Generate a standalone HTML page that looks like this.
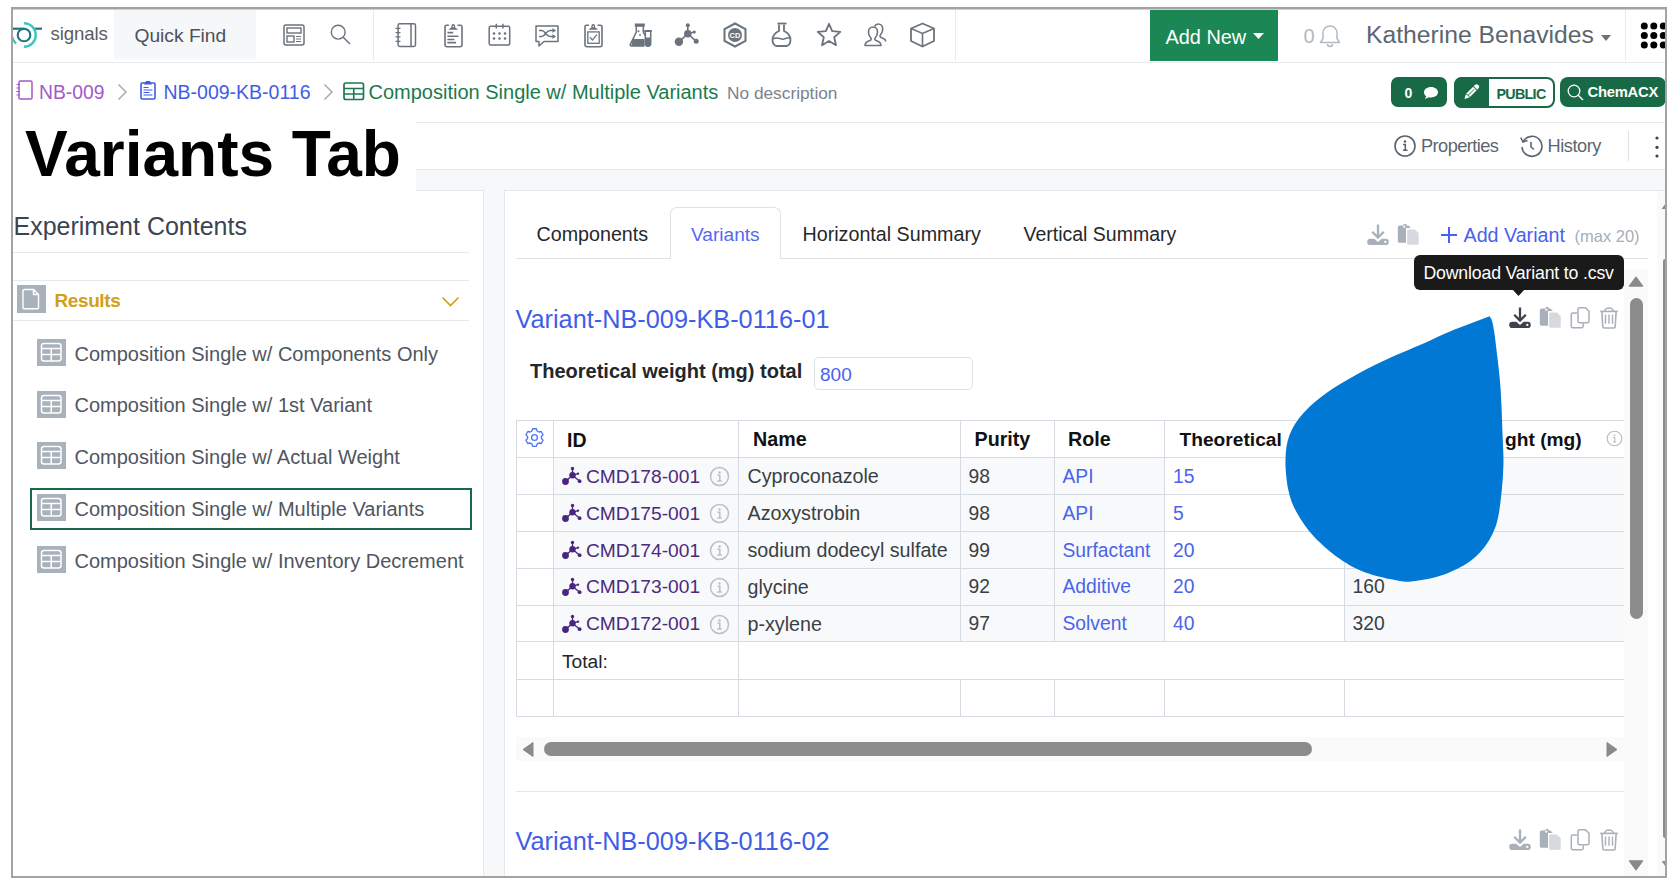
<!DOCTYPE html>
<html><head><meta charset="utf-8"><style>
html,body{margin:0;padding:0;background:#fff;width:1672px;height:885px;overflow:hidden;position:relative}
.t{position:absolute;white-space:nowrap;font-family:"Liberation Sans",sans-serif;line-height:normal}
svg{display:block}
</style></head><body>
<div style="position:absolute;left:13px;top:9px;width:1652px;height:1px;background:#b9dcc3"></div>
<div style="position:absolute;left:13px;top:62px;width:1652px;height:1px;background:#e8eaee"></div>
<div style="position:absolute;left:114px;top:10px;width:142px;height:49px;background:#f6f7f9"></div>
<div style="position:absolute;left:373px;top:10px;width:1px;height:51px;background:#e9ebee"></div>
<div style="position:absolute;left:955px;top:10px;width:1px;height:51px;background:#e9ebee"></div>
<div style="position:absolute;left:1625px;top:10px;width:1px;height:51px;background:#e9ebee"></div>
<div style="position:absolute;left:13px;top:122px;width:1652px;height:1px;background:#e6e9ed"></div>
<div style="position:absolute;left:13px;top:169px;width:1652px;height:1px;background:#e6e9ed"></div>
<div style="position:absolute;left:13px;top:170px;width:1652px;height:20px;background:#f7f8fa"></div>
<div style="position:absolute;left:13px;top:190px;width:470px;height:687px;background:#fff;border-top:1px solid #e4e8ec;border-right:1px solid #e4e8ec;box-sizing:border-box;width:471px"></div>
<div style="position:absolute;left:484px;top:190px;width:20px;height:687px;background:#f7f8fa"></div>
<div style="position:absolute;left:504px;top:190px;width:1153px;height:687px;background:#fff;border-top:1px solid #e4e8ec;border-left:1px solid #e4e8ec;box-sizing:border-box"></div>
<div style="position:absolute;left:1657px;top:190px;width:8px;height:687px;background:#fafafa"></div>
<div style="position:absolute;left:1657px;top:190px;width:8px;height:1px;background:#e4e8ec"></div>
<div style="position:absolute;left:13px;top:122px;width:403px;height:69px;background:#fff"></div>
<svg style="position:absolute;left:13px;top:20px;overflow:visible;" width="32" height="30" viewBox="0 0 32 30">
<circle cx="11" cy="15" r="6.3" fill="none" stroke="#1f7680" stroke-width="2.1"/>
<path d="M0 8.7 H11.5" stroke="#1f7680" stroke-width="2.2"/>
<path d="M22 8.7 H29" stroke="#1f7680" stroke-width="2.2"/>
<path d="M11 3.2 A11.8 11.8 0 0 1 11 26.8" fill="none" stroke="#3ac6bf" stroke-width="2.4"/>
<path d="M-0.8 16.9 A11.8 11.8 0 0 0 3.1 23.7" fill="none" stroke="#3ac6bf" stroke-width="2.4"/>
</svg>
<div class="t" style="left:50.5px;top:23.47px;font-size:18.6px;color:#585d62;font-weight:400;letter-spacing:-0.1px">signals</div>
<div class="t" style="left:134.5px;top:25.37px;font-size:19.2px;color:#4b525a;font-weight:400;">Quick Find</div>
<svg style="position:absolute;left:283px;top:24px;overflow:visible;" width="22" height="22" viewBox="0 0 22 22"><rect x="1" y="1" width="20" height="20" rx="2" fill="none" stroke="#6b737c" stroke-width="1.5"/>
<rect x="4" y="4" width="14" height="5" fill="none" stroke="#6b737c" stroke-width="1.4"/>
<rect x="4" y="12" width="7" height="6" fill="none" stroke="#6b737c" stroke-width="1.4"/>
<path d="M13 12.5h5M13 15h5M13 17.5h5" stroke="#6b737c" stroke-width="1.2"/></svg>
<svg style="position:absolute;left:330px;top:24px;overflow:visible;" width="21" height="21" viewBox="0 0 21 21"><circle cx="8.2" cy="8.2" r="6.9" fill="none" stroke="#6b737c" stroke-width="1.4"/><path d="M13.2 13.2 L20 20" stroke="#6b737c" stroke-width="1.5"/></svg>
<svg style="position:absolute;left:394px;top:23px;overflow:visible;" width="23" height="24" viewBox="0 0 23 24"><rect x="4.1" y="0.8" width="17.4" height="22.6" rx="1.6" fill="none" stroke="#6b737c" stroke-width="1.5"/>
<path d="M17 0.8v22.6" stroke="#6b737c" stroke-width="1.5"/>
<path d="M1.5 5.3h5M1.5 9.6h5M1.5 13.9h5M1.5 18.4h5" stroke="#6b737c" stroke-width="1.3"/></svg>
<svg style="position:absolute;left:444px;top:23px;overflow:visible;" width="19" height="25" viewBox="0 0 19 25"><path d="M4.9 2.2H2.6A1.6 1.6 0 0 0 1 3.8V22.1A1.6 1.6 0 0 0 2.6 23.7H16.4A1.6 1.6 0 0 0 18 22.1V3.8A1.6 1.6 0 0 0 16.4 2.2H13.5" fill="none" stroke="#6b737c" stroke-width="1.6"/><path d="M4.4 6.8L7.4 4.3V2.9A1.85 1.85 0 0 1 11.1 2.9V4.3L14.1 6.8z" fill="#6b737c"/><circle cx="9.25" cy="3.4" r="0.75" fill="#fff"/><path d="M3.4 9.6H9.2M3.4 13.2H14.4M3.4 16.5H10.4M3.4 19.6H12" stroke="#6b737c" stroke-width="1.6"/></svg>
<svg style="position:absolute;left:488px;top:23px;overflow:visible;" width="23" height="23" viewBox="0 0 23 23"><rect x="1.2" y="3.2" width="20.5" height="18.8" rx="1.5" fill="none" stroke="#6b737c" stroke-width="1.5"/>
<path d="M8.3 0.8v4.8M14.9 0.8v4.8" stroke="#6b737c" stroke-width="1.5"/>
<circle cx="6" cy="10.5" r="1.3" fill="#6b737c"/><circle cx="11.5" cy="10.5" r="1.3" fill="#6b737c"/><circle cx="17" cy="10.5" r="1.3" fill="#6b737c"/>
<circle cx="6" cy="15.5" r="1.3" fill="#6b737c"/><circle cx="11.5" cy="15.5" r="1.3" fill="#6b737c"/><circle cx="17" cy="15.5" r="1.3" fill="#6b737c"/></svg>
<svg style="position:absolute;left:534px;top:24px;overflow:visible;" width="26" height="23" viewBox="0 0 26 23"><path d="M2 2h22v15.5H10l-5 4.5v-4.5H2z" fill="none" stroke="#6b737c" stroke-width="1.5" stroke-linejoin="round"/>
<path d="M5 6.5h3c3 0 4 6 8 6h4M5 12.5h3c3 0 4-6 8-6h4" fill="none" stroke="#6b737c" stroke-width="1.5"/>
<path d="M18.5 4 l3.5 2.5 -3.5 2.5z M18.5 10 l3.5 2.5 -3.5 2.5z" fill="#6b737c"/></svg>
<svg style="position:absolute;left:584px;top:23px;overflow:visible;" width="19" height="25" viewBox="0 0 19 25"><path d="M4.9 2.2H2.6A1.6 1.6 0 0 0 1 3.8V22.1A1.6 1.6 0 0 0 2.6 23.7H16.4A1.6 1.6 0 0 0 18 22.1V3.8A1.6 1.6 0 0 0 16.4 2.2H13.5" fill="none" stroke="#6b737c" stroke-width="1.6"/><path d="M4.4 6.8L7.4 4.3V2.9A1.85 1.85 0 0 1 11.1 2.9V4.3L14.1 6.8z" fill="#6b737c"/><circle cx="9.25" cy="3.4" r="0.75" fill="#fff"/><rect x="3.8" y="8.9" width="11.4" height="11.4" fill="none" stroke="#6b737c" stroke-width="1.3"/><path d="M5.8 14.2l2.6 2.8 4.6-5.3" fill="none" stroke="#6b737c" stroke-width="1.2"/></svg>
<svg style="position:absolute;left:629px;top:22px;overflow:visible;" width="24" height="26" viewBox="0 0 24 26"><rect x="5.8" y="1.5" width="10" height="3.3" fill="#6b737c"/>
<path d="M7.3 4.5V10L1.3 22.3C.9 23.3 1.4 24 2.4 24H15.5" fill="none" stroke="#6b737c" stroke-width="1.5"/>
<path d="M14.3 4.5V10L16 13.5" fill="none" stroke="#6b737c" stroke-width="1.5"/>
<path d="M3.8 17H15.5V24H2.3z" fill="#6b737c"/>
<circle cx="9.5" cy="9.2" r="1" fill="#6b737c"/><circle cx="11" cy="13" r="0.9" fill="#6b737c"/>
<rect x="15.3" y="8" width="7.5" height="2" fill="#6b737c"/>
<path d="M16.3 9V21.5A2.7 2.7 0 0 0 21.7 21.5V9" fill="none" stroke="#6b737c" stroke-width="1.5"/>
<path d="M16.3 15.5H21.7V21.5A2.7 2.7 0 0 1 16.3 21.5z" fill="#6b737c"/></svg>
<svg style="position:absolute;left:674px;top:22px;overflow:visible;" width="27" height="26" viewBox="0 0 27 26"><path d="M4.7 19.8L13.8 11.8M13.8 11.8V3.2M13.8 11.8L20.3 10M13.8 11.8L22.4 19.3" stroke="#6b737c" stroke-width="1.6"/>
<circle cx="4.9" cy="19.8" r="4.2" fill="#6b737c"/><circle cx="13.8" cy="11.8" r="3.8" fill="#6b737c"/>
<circle cx="13.8" cy="3.2" r="2" fill="#6b737c"/><circle cx="20.3" cy="10" r="1.6" fill="#6b737c"/><circle cx="22.2" cy="19.3" r="2.5" fill="#6b737c"/></svg>
<svg style="position:absolute;left:723px;top:22px;overflow:visible;" width="24" height="26" viewBox="0 0 24 26"><path d="M12 1.5 L22.5 7.2 V18.8 L12 24.5 L1.5 18.8 V7.2z" fill="none" stroke="#6b737c" stroke-width="2"/>
<circle cx="12" cy="13" r="7" fill="#6b737c"/>
<text x="12" y="15.6" font-size="7.5" font-family="Liberation Sans" font-weight="700" fill="#fff" text-anchor="middle">CD</text></svg>
<svg style="position:absolute;left:771px;top:22px;overflow:visible;" width="22" height="26" viewBox="0 0 22 26"><path d="M6.5 1.5h9" stroke="#6b737c" stroke-width="1.8"/>
<path d="M8 2.5v6.5c-4 1.8-6.5 5-6.5 9 0 3.5 2 6 4 6h10c2 0 4-2.5 4-6 0-4-2.5-7.2-6.5-9V2.5" fill="none" stroke="#6b737c" stroke-width="1.8"/>
<path d="M2 17c4-3 8 1 11 0s5-2 7-1" fill="none" stroke="#6b737c" stroke-width="1.5"/></svg>
<svg style="position:absolute;left:816px;top:22px;overflow:visible;" width="26" height="26" viewBox="0 0 26 26"><path d="M13 1.8 L16.2 9.2 L24.3 9.9 L18.2 15.2 L20 23.2 L13 19 L6 23.2 L7.8 15.2 L1.7 9.9 L9.8 9.2z" fill="none" stroke="#6b737c" stroke-width="1.8" stroke-linejoin="round"/></svg>
<svg style="position:absolute;left:864px;top:23px;overflow:visible;" width="25" height="25" viewBox="0 0 25 25"><path d="M1 22.5c0-3 2-4 5-5 1.5-.5 1.5-2 .5-3-1.5-1.5-2-3.5-2-5.5 0-3 2-5 4.5-5s4.5 2 4.5 5c0 2-.5 4-2 5.5-1 1-1 2.5.5 3 3 1 5 2 5 5z" fill="none" stroke="#6b737c" stroke-width="1.6" stroke-linejoin="round"/>
<path d="M10.5 3.5c.8-1.5 2-2.5 3.7-2.5 2.5 0 4.5 2 4.5 5 0 2-.5 4-2 5.5-1 1-1 2.5.5 3 2.5.8 4.5 1.8 4.5 4" fill="none" stroke="#6b737c" stroke-width="1.6"/></svg>
<svg style="position:absolute;left:909px;top:22px;overflow:visible;" width="27" height="26" viewBox="0 0 27 26"><path d="M13.5 1.5 L25 6.5 V19 L13.5 24.5 L2 19 V6.5z" fill="none" stroke="#6b737c" stroke-width="1.8" stroke-linejoin="round"/>
<path d="M2 6.5 L13.5 11.5 L25 6.5 M13.5 11.5 V24.5" fill="none" stroke="#6b737c" stroke-width="1.6"/></svg>
<div style="position:absolute;left:1150px;top:10px;width:128px;height:51px;background:#1b8754"></div>
<div class="t" style="left:1165.5px;top:25.79px;font-size:19.9px;color:#fff;font-weight:400;">Add New</div>
<svg style="position:absolute;left:1253px;top:33px;overflow:visible;" width="11" height="6" viewBox="0 0 11 6"><path d="M0 0h11L5.5 6z" fill="#fff"/></svg>
<div class="t" style="left:1303.5px;top:25.00px;font-size:20px;color:#b2b9c2;font-weight:400;">0</div>
<svg style="position:absolute;left:1319px;top:24px;overflow:visible;" width="22" height="23" viewBox="0 0 22 23"><path d="M11 2c-4 0-7 3-7 7v5.5L1.5 18.5h19L18 14.5V9c0-4-3-7-7-7z" fill="none" stroke="#b2b9c2" stroke-width="1.5" stroke-linejoin="round"/>
<path d="M8.5 20a2.5 2.5 0 0 0 5 0" fill="none" stroke="#b2b9c2" stroke-width="1.5"/></svg>
<div class="t" style="left:1366px;top:21.15px;font-size:24.7px;color:#5c6670;font-weight:400;">Katherine Benavides</div>
<svg style="position:absolute;left:1601px;top:35px;overflow:visible;" width="10" height="6" viewBox="0 0 10 6"><path d="M0 0h10L5 6z" fill="#6b737c"/></svg>
<svg style="position:absolute;left:1640px;top:22px;overflow:visible;" width="34" height="30" viewBox="0 0 34 30"><circle cx="4.3" cy="4.0" r="3.5" fill="#000"/><circle cx="13.8" cy="4.0" r="3.5" fill="#000"/><circle cx="23.3" cy="4.0" r="3.5" fill="#000"/><circle cx="32.8" cy="4.0" r="3.5" fill="#000"/><circle cx="4.3" cy="13.5" r="3.5" fill="#000"/><circle cx="13.8" cy="13.5" r="3.5" fill="#000"/><circle cx="23.3" cy="13.5" r="3.5" fill="#000"/><circle cx="32.8" cy="13.5" r="3.5" fill="#000"/><circle cx="4.3" cy="23.0" r="3.5" fill="#000"/><circle cx="13.8" cy="23.0" r="3.5" fill="#000"/><circle cx="23.3" cy="23.0" r="3.5" fill="#000"/><circle cx="32.8" cy="23.0" r="3.5" fill="#000"/></svg>
<svg style="position:absolute;left:16px;top:80px;overflow:visible;" width="17" height="20" viewBox="0 0 17 20"><rect x="3" y="1" width="13" height="18" rx="1.3" fill="none" stroke="#a35ac8" stroke-width="1.5"/>
<path d="M0.5 4.5h3.5M0.5 8h3.5M0.5 11.5h3.5M0.5 15h3.5" stroke="#a35ac8" stroke-width="1.1"/></svg>
<div class="t" style="left:39px;top:81.63px;font-size:19.3px;color:#a35ac8;font-weight:400;">NB-009</div>
<svg style="position:absolute;left:117px;top:83px;overflow:visible;" width="11" height="18" viewBox="0 0 11 18"><path d="M1.5 1.5 L9 9 L1.5 16.5" fill="none" stroke="#a9afb7" stroke-width="1.6"/></svg>
<svg style="position:absolute;left:140px;top:80px;overflow:visible;" width="17" height="20" viewBox="0 0 17 20"><rect x="1" y="3" width="14" height="16" rx="1.2" fill="none" stroke="#3e5ce6" stroke-width="1.6"/>
<path d="M5 4 L6.5 1.5h3L11 4z" fill="#3e5ce6" stroke="#3e5ce6" stroke-width="1.2"/>
<path d="M3.5 7.5h5M3.5 10h9M3.5 12.5h6M3.5 15h9" stroke="#3e5ce6" stroke-width="1.2"/></svg>
<div class="t" style="left:163.5px;top:81.45px;font-size:19.5px;color:#3e5ce6;font-weight:400;">NB-009-KB-0116</div>
<svg style="position:absolute;left:323px;top:83px;overflow:visible;" width="11" height="18" viewBox="0 0 11 18"><path d="M1.5 1.5 L9 9 L1.5 16.5" fill="none" stroke="#a9afb7" stroke-width="1.6"/></svg>
<svg style="position:absolute;left:343px;top:82px;overflow:visible;" width="22" height="19" viewBox="0 0 22 19"><rect x="1" y="1" width="19.5" height="16.5" rx="2" fill="none" stroke="#1b7a4c" stroke-width="1.7"/>
<path d="M1 6.5h19.5M1 12h19.5M10.75 6.5v11" stroke="#1b7a4c" stroke-width="1.6"/></svg>
<div class="t" style="left:368.5px;top:81.00px;font-size:20px;color:#1b7a4c;font-weight:400;letter-spacing:0px">Composition Single w/ Multiple Variants</div>
<div class="t" style="left:727px;top:83.04px;font-size:17.3px;color:#7b838e;font-weight:400;">No description</div>
<div style="position:absolute;left:1391px;top:77px;width:56px;height:30px;background:#176a45;border-radius:7px"></div>
<div class="t" style="left:1404.5px;top:84.83px;font-size:14px;color:#fff;font-weight:700;">0</div>
<svg style="position:absolute;left:1423px;top:86px;overflow:visible;" width="16" height="14" viewBox="0 0 16 14"><path d="M8 1c4 0 7 2.3 7 5.2S12 11.4 8 11.4c-.7 0-1.4-.1-2-.2L2 13l1.2-2.8C1.8 9.3 1 7.8 1 6.2 1 3.3 4 1 8 1z" fill="#fff"/></svg>
<div style="position:absolute;left:1454px;top:77px;width:101px;height:31px;border:2px solid #176a45;border-radius:8px;box-sizing:border-box;background:#fff;overflow:hidden"></div>
<div style="position:absolute;left:1454px;top:77px;width:35px;height:31px;background:#176a45;border-radius:8px 0 0 8px"></div>
<svg style="position:absolute;left:1462px;top:84px;overflow:visible;" width="18" height="17" viewBox="0 0 18 17"><g transform="rotate(45 9 8.5)"><path d="M6.5 0.5A2.5 2.5 0 0 1 11.5 0.5V13.2L9 17.8L6.5 13.2z" fill="#fff"/><path d="M6.3 2.6H11.7" stroke="#176a45" stroke-width="1"/><path d="M9 4V12.5" stroke="#176a45" stroke-width="0.9"/><path d="M6.5 13.2L9 12.3L11.5 13.2" fill="none" stroke="#176a45" stroke-width="0.8"/></g></svg>
<div class="t" style="left:1496.5px;top:85.56px;font-size:14.3px;color:#176a45;font-weight:700;letter-spacing:-0.7px">PUBLIC</div>
<div style="position:absolute;left:1560px;top:77px;width:106px;height:30px;background:#176a45;border-radius:8px"></div>
<svg style="position:absolute;left:1567px;top:84px;overflow:visible;" width="18" height="17" viewBox="0 0 18 17"><circle cx="7" cy="7" r="5.8" fill="none" stroke="#fff" stroke-width="1.3"/><path d="M11.2 11.2L16 16" stroke="#fff" stroke-width="1.3"/></svg>
<div class="t" style="left:1587.5px;top:84.21px;font-size:14.8px;color:#fff;font-weight:700;letter-spacing:-0.25px">ChemACX</div>
<svg style="position:absolute;left:1393px;top:134px;overflow:visible;" width="24" height="24" viewBox="0 0 24 24"><circle cx="12" cy="12" r="10" fill="none" stroke="#5b636c" stroke-width="1.6"/><circle cx="12" cy="7.5" r="1.3" fill="#5b636c"/><path d="M10 10.5h2.3v5.5M10 16.2h4.5" fill="none" stroke="#5b636c" stroke-width="1.6"/></svg>
<div class="t" style="left:1421px;top:136.03px;font-size:18.2px;color:#5d6670;font-weight:400;letter-spacing:-0.55px">Properties</div>
<svg style="position:absolute;left:1519px;top:134px;overflow:visible;" width="25" height="24" viewBox="0 0 25 24"><path d="M4.5 7 A10 10 0 1 1 3 13" fill="none" stroke="#5b636c" stroke-width="1.6"/><path d="M1.8 3.5 L4 8 L8.5 6.5" fill="none" stroke="#5b636c" stroke-width="1.6"/><path d="M12 8v5l3 2.5" fill="none" stroke="#5b636c" stroke-width="1.6"/></svg>
<div class="t" style="left:1547.5px;top:136.03px;font-size:18.2px;color:#5d6670;font-weight:400;letter-spacing:-0.45px">History</div>
<div style="position:absolute;left:1628px;top:131px;width:1px;height:30px;background:#dde1e6"></div>
<svg style="position:absolute;left:1654px;top:135px;overflow:visible;" width="6" height="24" viewBox="0 0 6 24"><circle cx="3" cy="3" r="1.6" fill="#3c434a"/><circle cx="3" cy="12.3" r="1.6" fill="#3c434a"/><circle cx="3" cy="21" r="1.6" fill="#3c434a"/></svg>
<div class="t" style="left:25px;top:117.18px;font-size:64px;color:#000;font-weight:700;">Variants Tab</div>
<div class="t" style="left:13.5px;top:211.78px;font-size:25px;color:#3b4450;font-weight:400;">Experiment Contents</div>
<div style="position:absolute;left:13px;top:252px;width:456px;height:1px;background:#e6e9ed"></div>
<div style="position:absolute;left:13px;top:280px;width:456px;height:1px;background:#e6e9ed"></div>
<div style="position:absolute;left:13px;top:320px;width:456px;height:1px;background:#e6e9ed"></div>
<div style="position:absolute;left:17px;top:285px;width:29px;height:28px;background:#a9b1bb"></div>
<svg style="position:absolute;left:17px;top:285px;overflow:visible;" width="29" height="28" viewBox="0 0 29 28"><path d="M7 4.5h9.5l5 5V22.5a1.3 1.3 0 0 1-1.3 1.3H7.3A1.3 1.3 0 0 1 6 22.5V5.8A1.3 1.3 0 0 1 7.3 4.5z M16.5 4.5v5h5" fill="none" stroke="#fff" stroke-width="1.4"/></svg>
<div class="t" style="left:54.5px;top:290.31px;font-size:19px;color:#d29f1a;font-weight:700;letter-spacing:-0.4px">Results</div>
<svg style="position:absolute;left:441px;top:296px;overflow:visible;" width="19" height="11" viewBox="0 0 19 11"><path d="M1.5 1.5 L9.5 9.5 L17.5 1.5" fill="none" stroke="#cf9f1e" stroke-width="1.7"/></svg>
<div style="position:absolute;left:37px;top:339px;width:28.5px;height:27px;background:#a9b1bb"></div>
<svg style="position:absolute;left:37px;top:339px;overflow:visible;" width="29" height="27" viewBox="0 0 29 27"><rect x="4.5" y="4.5" width="19.5" height="17.5" rx="2.5" fill="none" stroke="#fff" stroke-width="1.5"/><path d="M4.5 9.5h19.5M4.5 15.5h19.5M14.25 9.5v12.5" stroke="#fff" stroke-width="1.5"/></svg>
<div class="t" style="left:74.5px;top:342.90px;font-size:20px;color:#4f565f;font-weight:400;">Composition Single w/ Components Only</div>
<div style="position:absolute;left:37px;top:390.5px;width:28.5px;height:27px;background:#a9b1bb"></div>
<svg style="position:absolute;left:37px;top:390.5px;overflow:visible;" width="29" height="27" viewBox="0 0 29 27"><rect x="4.5" y="4.5" width="19.5" height="17.5" rx="2.5" fill="none" stroke="#fff" stroke-width="1.5"/><path d="M4.5 9.5h19.5M4.5 15.5h19.5M14.25 9.5v12.5" stroke="#fff" stroke-width="1.5"/></svg>
<div class="t" style="left:74.5px;top:394.40px;font-size:20px;color:#4f565f;font-weight:400;">Composition Single w/ 1st Variant</div>
<div style="position:absolute;left:37px;top:442px;width:28.5px;height:27px;background:#a9b1bb"></div>
<svg style="position:absolute;left:37px;top:442px;overflow:visible;" width="29" height="27" viewBox="0 0 29 27"><rect x="4.5" y="4.5" width="19.5" height="17.5" rx="2.5" fill="none" stroke="#fff" stroke-width="1.5"/><path d="M4.5 9.5h19.5M4.5 15.5h19.5M14.25 9.5v12.5" stroke="#fff" stroke-width="1.5"/></svg>
<div class="t" style="left:74.5px;top:445.90px;font-size:20px;color:#4f565f;font-weight:400;">Composition Single w/ Actual Weight</div>
<div style="position:absolute;left:37px;top:494px;width:28.5px;height:27px;background:#a9b1bb"></div>
<svg style="position:absolute;left:37px;top:494px;overflow:visible;" width="29" height="27" viewBox="0 0 29 27"><rect x="4.5" y="4.5" width="19.5" height="17.5" rx="2.5" fill="none" stroke="#fff" stroke-width="1.5"/><path d="M4.5 9.5h19.5M4.5 15.5h19.5M14.25 9.5v12.5" stroke="#fff" stroke-width="1.5"/></svg>
<div class="t" style="left:74.5px;top:497.90px;font-size:20px;color:#4f565f;font-weight:400;">Composition Single w/ Multiple Variants</div>
<div style="position:absolute;left:37px;top:546px;width:28.5px;height:27px;background:#a9b1bb"></div>
<svg style="position:absolute;left:37px;top:546px;overflow:visible;" width="29" height="27" viewBox="0 0 29 27"><rect x="4.5" y="4.5" width="19.5" height="17.5" rx="2.5" fill="none" stroke="#fff" stroke-width="1.5"/><path d="M4.5 9.5h19.5M4.5 15.5h19.5M14.25 9.5v12.5" stroke="#fff" stroke-width="1.5"/></svg>
<div class="t" style="left:74.5px;top:549.90px;font-size:20px;color:#4f565f;font-weight:400;">Composition Single w/ Inventory Decrement</div>
<div style="position:absolute;left:30px;top:487.5px;width:442px;height:42.5px;border:2px solid #176a45;box-sizing:border-box"></div>
<div class="t" style="left:536.5px;top:223.47px;font-size:19.7px;color:#25282c;font-weight:400;">Components</div>
<div style="position:absolute;left:670px;top:207px;width:111px;height:52px;border:1px solid #dde2e8;border-bottom:none;border-radius:7px 7px 0 0;background:#fff;box-sizing:border-box"></div>
<div style="position:absolute;left:516px;top:258px;width:154px;height:1px;background:#dde2e8"></div>
<div style="position:absolute;left:781px;top:258px;width:867px;height:1px;background:#dde2e8"></div>
<div class="t" style="left:691px;top:224.01px;font-size:19.1px;color:#5468f2;font-weight:400;">Variants</div>
<div class="t" style="left:802.5px;top:223.17px;font-size:19.7px;color:#25282c;font-weight:400;">Horizontal Summary</div>
<div class="t" style="left:1023.5px;top:223.35px;font-size:19.5px;color:#25282c;font-weight:400;">Vertical Summary</div>
<svg style="position:absolute;left:1367px;top:224px;overflow:visible;" width="22" height="22" viewBox="0 0 22 22"><path d="M11 0.5V13.5M5.2 7.8l5.8 5.8 5.8-5.8" fill="none" stroke="#a9b0b9" stroke-width="2.3"/><path d="M3.3 14.8H7.3L11 18L14.7 14.8H18.7A3.1 3.1 0 0 1 18.7 21H3.3A3.1 3.1 0 0 1 3.3 14.8z" fill="#a9b0b9"/><circle cx="18.3" cy="17.9" r="1.15" fill="#fff"/></svg>
<svg style="position:absolute;left:1397px;top:224px;overflow:visible;" width="23" height="22" viewBox="0 0 23 22"><path d="M2.5 1.5H6.2A1.8 1.8 0 0 1 9.8 1.5H11.5L13.8 4H9V18.8H2.5A1.7 1.7 0 0 1 .8 17.1V3.2A1.7 1.7 0 0 1 2.5 1.5z" fill="#a9b0b9"/><circle cx="7.3" cy="2.7" r="1.1" fill="#fff"/><path d="M11.5 5.5H18L21.7 9.2V19.2A1.5 1.5 0 0 1 20.2 20.7H11.6A1.5 1.5 0 0 1 10.1 19.2V6.9A1.5 1.5 0 0 1 11.5 5.5z" fill="#d6dade"/></svg>
<svg style="position:absolute;left:1440px;top:226px;overflow:visible;" width="18" height="18" viewBox="0 0 18 18"><path d="M9 1v16M1 9h16" stroke="#4a5ff0" stroke-width="2"/></svg>
<div class="t" style="left:1463.5px;top:224.47px;font-size:19.7px;color:#4a5ff0;font-weight:400;">Add Variant</div>
<div class="t" style="left:1574.5px;top:227.37px;font-size:16.5px;color:#a6aeb9;font-weight:400;">(max 20)</div>
<div class="t" style="left:515.5px;top:305.40px;font-size:25.3px;color:#3f5ee8;font-weight:400;">Variant-NB-009-KB-0116-01</div>
<svg style="position:absolute;left:1509px;top:307px;overflow:visible;" width="22" height="22" viewBox="0 0 22 22"><path d="M11 0.5V13.5M5.2 7.8l5.8 5.8 5.8-5.8" fill="none" stroke="#3d434a" stroke-width="2.3"/><path d="M3.3 14.8H7.3L11 18L14.7 14.8H18.7A3.1 3.1 0 0 1 18.7 21H3.3A3.1 3.1 0 0 1 3.3 14.8z" fill="#3d434a"/><circle cx="18.3" cy="17.9" r="1.15" fill="#fff"/></svg>
<svg style="position:absolute;left:1539px;top:307px;overflow:visible;" width="23" height="22" viewBox="0 0 23 22"><path d="M2.5 1.5H6.2A1.8 1.8 0 0 1 9.8 1.5H11.5L13.8 4H9V18.8H2.5A1.7 1.7 0 0 1 .8 17.1V3.2A1.7 1.7 0 0 1 2.5 1.5z" fill="#a9b0b9"/><circle cx="7.3" cy="2.7" r="1.1" fill="#fff"/><path d="M11.5 5.5H18L21.7 9.2V19.2A1.5 1.5 0 0 1 20.2 20.7H11.6A1.5 1.5 0 0 1 10.1 19.2V6.9A1.5 1.5 0 0 1 11.5 5.5z" fill="#d6dade"/></svg>
<svg style="position:absolute;left:1570px;top:307px;overflow:visible;" width="21" height="22" viewBox="0 0 21 22"><path d="M9.5 .8H15.5L19 4.3V14.2A1.5 1.5 0 0 1 17.5 15.7H9.5A1.5 1.5 0 0 1 8 14.2V2.3A1.5 1.5 0 0 1 9.5 .8z" fill="none" stroke="#a9b0b9" stroke-width="1.5"/><path d="M7 5.9H2.8A1.5 1.5 0 0 0 1.3 7.4V19.2A1.5 1.5 0 0 0 2.8 20.7H11.7A1.5 1.5 0 0 0 13.2 19.2V16.5" fill="none" stroke="#a9b0b9" stroke-width="1.5"/></svg>
<svg style="position:absolute;left:1599px;top:307px;overflow:visible;" width="20" height="22" viewBox="0 0 20 22"><path d="M1.2 4.4H18.8" stroke="#a9b0b9" stroke-width="1.7"/><path d="M5.6 4.2C6.3 1.6 7.1 1 10 1S13.7 1.6 14.4 4.2" fill="none" stroke="#a9b0b9" stroke-width="1.6"/><path d="M2.9 5L3.8 19.4A1.6 1.6 0 0 0 5.4 21H14.6A1.6 1.6 0 0 0 16.2 19.4L17.1 5" fill="none" stroke="#a9b0b9" stroke-width="1.6"/><path d="M6.5 7.6V16.8M10 7.6V16.8M13.5 7.6V16.8" stroke="#a9b0b9" stroke-width="1.4"/></svg>
<div class="t" style="left:530px;top:360.10px;font-size:20px;color:#23272b;font-weight:700;">Theoretical weight (mg) total</div>
<div style="position:absolute;left:814px;top:357px;width:159px;height:33px;border:1px solid #dde2e8;border-radius:5px;box-sizing:border-box;background:#fff"></div>
<div class="t" style="left:820px;top:364.00px;font-size:19px;color:#4a5ff0;font-weight:400;">800</div>
<div style="position:absolute;left:553px;top:457px;width:1071px;height:37px;background:#f8f9fb"></div>
<div style="position:absolute;left:1164px;top:457px;width:180px;height:37px;background:#fff"></div>
<div style="position:absolute;left:553px;top:494px;width:1071px;height:37px;background:#f8f9fb"></div>
<div style="position:absolute;left:1164px;top:494px;width:180px;height:37px;background:#fff"></div>
<div style="position:absolute;left:553px;top:531px;width:1071px;height:36.5px;background:#f8f9fb"></div>
<div style="position:absolute;left:1164px;top:531px;width:180px;height:36.5px;background:#fff"></div>
<div style="position:absolute;left:553px;top:567.5px;width:1071px;height:37.0px;background:#f8f9fb"></div>
<div style="position:absolute;left:1164px;top:567.5px;width:180px;height:37.0px;background:#fff"></div>
<div style="position:absolute;left:553px;top:604.5px;width:1071px;height:36.5px;background:#f8f9fb"></div>
<div style="position:absolute;left:1164px;top:604.5px;width:180px;height:36.5px;background:#fff"></div>
<div style="position:absolute;left:516px;top:420px;width:1108px;height:1px;background:#d6dbe2"></div>
<div style="position:absolute;left:516px;top:457px;width:1108px;height:1px;background:#d6dbe2"></div>
<div style="position:absolute;left:516px;top:494px;width:1108px;height:1px;background:#d6dbe2"></div>
<div style="position:absolute;left:516px;top:531px;width:1108px;height:1px;background:#d6dbe2"></div>
<div style="position:absolute;left:516px;top:567.5px;width:1108px;height:1px;background:#d6dbe2"></div>
<div style="position:absolute;left:516px;top:604.5px;width:1108px;height:1px;background:#d6dbe2"></div>
<div style="position:absolute;left:516px;top:641px;width:1108px;height:1px;background:#d6dbe2"></div>
<div style="position:absolute;left:516px;top:679px;width:1108px;height:1px;background:#d6dbe2"></div>
<div style="position:absolute;left:516px;top:716px;width:1108px;height:1px;background:#d6dbe2"></div>
<div style="position:absolute;left:516px;top:420px;width:1px;height:221px;background:#d6dbe2"></div>
<div style="position:absolute;left:516px;top:641px;width:1px;height:38px;background:#d6dbe2"></div>
<div style="position:absolute;left:516px;top:679px;width:1px;height:38px;background:#d6dbe2"></div>
<div style="position:absolute;left:553px;top:420px;width:1px;height:221px;background:#d6dbe2"></div>
<div style="position:absolute;left:553px;top:641px;width:1px;height:38px;background:#d6dbe2"></div>
<div style="position:absolute;left:553px;top:679px;width:1px;height:38px;background:#d6dbe2"></div>
<div style="position:absolute;left:738px;top:420px;width:1px;height:221px;background:#d6dbe2"></div>
<div style="position:absolute;left:738px;top:641px;width:1px;height:38px;background:#d6dbe2"></div>
<div style="position:absolute;left:738px;top:679px;width:1px;height:38px;background:#d6dbe2"></div>
<div style="position:absolute;left:960px;top:420px;width:1px;height:221px;background:#d6dbe2"></div>
<div style="position:absolute;left:960px;top:679px;width:1px;height:38px;background:#d6dbe2"></div>
<div style="position:absolute;left:1054px;top:420px;width:1px;height:221px;background:#d6dbe2"></div>
<div style="position:absolute;left:1054px;top:679px;width:1px;height:38px;background:#d6dbe2"></div>
<div style="position:absolute;left:1164px;top:420px;width:1px;height:221px;background:#d6dbe2"></div>
<div style="position:absolute;left:1164px;top:679px;width:1px;height:38px;background:#d6dbe2"></div>
<div style="position:absolute;left:1344px;top:420px;width:1px;height:221px;background:#d6dbe2"></div>
<div style="position:absolute;left:1344px;top:679px;width:1px;height:38px;background:#d6dbe2"></div>
<svg style="position:absolute;left:523.7px;top:426.6px;overflow:visible;" width="21" height="21" viewBox="0 0 21 21"><path d="M7.05 4.52 L7.96 3.87 L8.63 1.70 L12.37 1.70 L13.04 3.87 L13.95 4.52 L14.97 4.98 L17.19 4.48 L19.06 7.72 L17.51 9.39 L17.40 10.50 L17.51 11.61 L19.06 13.28 L17.19 16.52 L14.97 16.02 L13.95 16.48 L13.04 17.13 L12.37 19.30 L8.63 19.30 L7.96 17.13 L7.05 16.48 L6.03 16.02 L3.81 16.52 L1.94 13.28 L3.49 11.61 L3.60 10.50 L3.49 9.39 L1.94 7.72 L3.81 4.48 L6.03 4.98Z" fill="none" stroke="#4f75f5" stroke-width="1.35" stroke-linejoin="round"/><circle cx="10.5" cy="10.5" r="2.9" fill="none" stroke="#4f75f5" stroke-width="1.35"/></svg>
<div class="t" style="left:567px;top:428.55px;font-size:19.5px;color:#111;font-weight:700;">ID</div>
<div class="t" style="left:753px;top:428.37px;font-size:19.7px;color:#111;font-weight:700;">Name</div>
<div class="t" style="left:974.5px;top:428.37px;font-size:19.7px;color:#111;font-weight:700;">Purity</div>
<div class="t" style="left:1068px;top:428.37px;font-size:19.7px;color:#111;font-weight:700;">Role</div>
<div class="t" style="left:1179.5px;top:428.82px;font-size:19.2px;color:#111;font-weight:700;">Theoretical</div>
<div class="t" style="left:1505px;top:428.82px;font-size:19.2px;color:#111;font-weight:700;">ght (mg)</div>
<svg style="position:absolute;left:1606px;top:430px;overflow:visible;" width="17" height="17" viewBox="0 0 17 17"><circle cx="8.5" cy="8.5" r="7.3" fill="none" stroke="#b5bcc4" stroke-width="1.1"/><circle cx="8.5" cy="5.3" r="0.9" fill="#b5bcc4"/><path d="M7.2 7.5h1.6v4.5M7 12h3" fill="none" stroke="#b5bcc4" stroke-width="1.1"/></svg>
<svg style="position:absolute;left:561px;top:466px;overflow:visible;" width="22" height="19" viewBox="0 0 22 19"><path d="M11.5 9.3 L11.5 2.5 M11.5 9.3 L4.5 15.5 M11.5 9.3 L18.6 15.2 M11.5 9.3 L17 7.6" stroke="#4a2580" stroke-width="1.3"/><circle cx="11.5" cy="9.3" r="3.2" fill="#4a2580"/><circle cx="11.5" cy="2.5" r="1.7" fill="#4a2580"/><circle cx="17" cy="7.6" r="1.2" fill="#4a2580"/><circle cx="4.5" cy="15.5" r="3.4" fill="#4a2580"/><circle cx="18.6" cy="15.2" r="1.9" fill="#4a2580"/></svg>
<div class="t" style="left:586px;top:465.92px;font-size:19.2px;color:#4b2a7e;font-weight:400;">CMD178-001</div>
<svg style="position:absolute;left:709px;top:466px;overflow:visible;" width="21" height="21" viewBox="0 0 21 21"><circle cx="10.5" cy="10.5" r="9" fill="none" stroke="#b9c0c8" stroke-width="1.5"/><circle cx="10.5" cy="6.5" r="1.2" fill="#b9c0c8"/><path d="M8.5 9.3h2.3v5.5M8.3 15h4.5" fill="none" stroke="#b9c0c8" stroke-width="1.5"/></svg>
<div class="t" style="left:747.5px;top:465.47px;font-size:19.7px;color:#3a3f45;font-weight:400;">Cyproconazole</div>
<div class="t" style="left:968.5px;top:465.83px;font-size:19.3px;color:#3a3f45;font-weight:400;">98</div>
<div class="t" style="left:1062.5px;top:465.83px;font-size:19.3px;color:#4a64e8;font-weight:400;">API</div>
<div class="t" style="left:1173px;top:465.83px;font-size:19.3px;color:#4a64e8;font-weight:400;">15</div>
<div class="t" style="left:1352.5px;top:465.83px;font-size:19.3px;color:#3a3f45;font-weight:400;">120</div>
<svg style="position:absolute;left:561px;top:503px;overflow:visible;" width="22" height="19" viewBox="0 0 22 19"><path d="M11.5 9.3 L11.5 2.5 M11.5 9.3 L4.5 15.5 M11.5 9.3 L18.6 15.2 M11.5 9.3 L17 7.6" stroke="#4a2580" stroke-width="1.3"/><circle cx="11.5" cy="9.3" r="3.2" fill="#4a2580"/><circle cx="11.5" cy="2.5" r="1.7" fill="#4a2580"/><circle cx="17" cy="7.6" r="1.2" fill="#4a2580"/><circle cx="4.5" cy="15.5" r="3.4" fill="#4a2580"/><circle cx="18.6" cy="15.2" r="1.9" fill="#4a2580"/></svg>
<div class="t" style="left:586px;top:502.92px;font-size:19.2px;color:#4b2a7e;font-weight:400;">CMD175-001</div>
<svg style="position:absolute;left:709px;top:503px;overflow:visible;" width="21" height="21" viewBox="0 0 21 21"><circle cx="10.5" cy="10.5" r="9" fill="none" stroke="#b9c0c8" stroke-width="1.5"/><circle cx="10.5" cy="6.5" r="1.2" fill="#b9c0c8"/><path d="M8.5 9.3h2.3v5.5M8.3 15h4.5" fill="none" stroke="#b9c0c8" stroke-width="1.5"/></svg>
<div class="t" style="left:747.5px;top:502.47px;font-size:19.7px;color:#3a3f45;font-weight:400;">Azoxystrobin</div>
<div class="t" style="left:968.5px;top:502.83px;font-size:19.3px;color:#3a3f45;font-weight:400;">98</div>
<div class="t" style="left:1062.5px;top:502.83px;font-size:19.3px;color:#4a64e8;font-weight:400;">API</div>
<div class="t" style="left:1173px;top:502.83px;font-size:19.3px;color:#4a64e8;font-weight:400;">5</div>
<div class="t" style="left:1352.5px;top:502.83px;font-size:19.3px;color:#3a3f45;font-weight:400;">40</div>
<svg style="position:absolute;left:561px;top:540px;overflow:visible;" width="22" height="19" viewBox="0 0 22 19"><path d="M11.5 9.3 L11.5 2.5 M11.5 9.3 L4.5 15.5 M11.5 9.3 L18.6 15.2 M11.5 9.3 L17 7.6" stroke="#4a2580" stroke-width="1.3"/><circle cx="11.5" cy="9.3" r="3.2" fill="#4a2580"/><circle cx="11.5" cy="2.5" r="1.7" fill="#4a2580"/><circle cx="17" cy="7.6" r="1.2" fill="#4a2580"/><circle cx="4.5" cy="15.5" r="3.4" fill="#4a2580"/><circle cx="18.6" cy="15.2" r="1.9" fill="#4a2580"/></svg>
<div class="t" style="left:586px;top:539.92px;font-size:19.2px;color:#4b2a7e;font-weight:400;">CMD174-001</div>
<svg style="position:absolute;left:709px;top:540px;overflow:visible;" width="21" height="21" viewBox="0 0 21 21"><circle cx="10.5" cy="10.5" r="9" fill="none" stroke="#b9c0c8" stroke-width="1.5"/><circle cx="10.5" cy="6.5" r="1.2" fill="#b9c0c8"/><path d="M8.5 9.3h2.3v5.5M8.3 15h4.5" fill="none" stroke="#b9c0c8" stroke-width="1.5"/></svg>
<div class="t" style="left:747.5px;top:539.47px;font-size:19.7px;color:#3a3f45;font-weight:400;">sodium dodecyl sulfate</div>
<div class="t" style="left:968.5px;top:539.83px;font-size:19.3px;color:#3a3f45;font-weight:400;">99</div>
<div class="t" style="left:1062.5px;top:539.83px;font-size:19.3px;color:#4a64e8;font-weight:400;">Surfactant</div>
<div class="t" style="left:1173px;top:539.83px;font-size:19.3px;color:#4a64e8;font-weight:400;">20</div>
<div class="t" style="left:1352.5px;top:539.83px;font-size:19.3px;color:#3a3f45;font-weight:400;">160</div>
<svg style="position:absolute;left:561px;top:576.5px;overflow:visible;" width="22" height="19" viewBox="0 0 22 19"><path d="M11.5 9.3 L11.5 2.5 M11.5 9.3 L4.5 15.5 M11.5 9.3 L18.6 15.2 M11.5 9.3 L17 7.6" stroke="#4a2580" stroke-width="1.3"/><circle cx="11.5" cy="9.3" r="3.2" fill="#4a2580"/><circle cx="11.5" cy="2.5" r="1.7" fill="#4a2580"/><circle cx="17" cy="7.6" r="1.2" fill="#4a2580"/><circle cx="4.5" cy="15.5" r="3.4" fill="#4a2580"/><circle cx="18.6" cy="15.2" r="1.9" fill="#4a2580"/></svg>
<div class="t" style="left:586px;top:576.42px;font-size:19.2px;color:#4b2a7e;font-weight:400;">CMD173-001</div>
<svg style="position:absolute;left:709px;top:576.5px;overflow:visible;" width="21" height="21" viewBox="0 0 21 21"><circle cx="10.5" cy="10.5" r="9" fill="none" stroke="#b9c0c8" stroke-width="1.5"/><circle cx="10.5" cy="6.5" r="1.2" fill="#b9c0c8"/><path d="M8.5 9.3h2.3v5.5M8.3 15h4.5" fill="none" stroke="#b9c0c8" stroke-width="1.5"/></svg>
<div class="t" style="left:747.5px;top:575.97px;font-size:19.7px;color:#3a3f45;font-weight:400;">glycine</div>
<div class="t" style="left:968.5px;top:576.33px;font-size:19.3px;color:#3a3f45;font-weight:400;">92</div>
<div class="t" style="left:1062.5px;top:576.33px;font-size:19.3px;color:#4a64e8;font-weight:400;">Additive</div>
<div class="t" style="left:1173px;top:576.33px;font-size:19.3px;color:#4a64e8;font-weight:400;">20</div>
<div class="t" style="left:1352.5px;top:576.33px;font-size:19.3px;color:#3a3f45;font-weight:400;">160</div>
<svg style="position:absolute;left:561px;top:613.5px;overflow:visible;" width="22" height="19" viewBox="0 0 22 19"><path d="M11.5 9.3 L11.5 2.5 M11.5 9.3 L4.5 15.5 M11.5 9.3 L18.6 15.2 M11.5 9.3 L17 7.6" stroke="#4a2580" stroke-width="1.3"/><circle cx="11.5" cy="9.3" r="3.2" fill="#4a2580"/><circle cx="11.5" cy="2.5" r="1.7" fill="#4a2580"/><circle cx="17" cy="7.6" r="1.2" fill="#4a2580"/><circle cx="4.5" cy="15.5" r="3.4" fill="#4a2580"/><circle cx="18.6" cy="15.2" r="1.9" fill="#4a2580"/></svg>
<div class="t" style="left:586px;top:613.42px;font-size:19.2px;color:#4b2a7e;font-weight:400;">CMD172-001</div>
<svg style="position:absolute;left:709px;top:613.5px;overflow:visible;" width="21" height="21" viewBox="0 0 21 21"><circle cx="10.5" cy="10.5" r="9" fill="none" stroke="#b9c0c8" stroke-width="1.5"/><circle cx="10.5" cy="6.5" r="1.2" fill="#b9c0c8"/><path d="M8.5 9.3h2.3v5.5M8.3 15h4.5" fill="none" stroke="#b9c0c8" stroke-width="1.5"/></svg>
<div class="t" style="left:747.5px;top:612.97px;font-size:19.7px;color:#3a3f45;font-weight:400;">p-xylene</div>
<div class="t" style="left:968.5px;top:613.33px;font-size:19.3px;color:#3a3f45;font-weight:400;">97</div>
<div class="t" style="left:1062.5px;top:613.33px;font-size:19.3px;color:#4a64e8;font-weight:400;">Solvent</div>
<div class="t" style="left:1173px;top:613.33px;font-size:19.3px;color:#4a64e8;font-weight:400;">40</div>
<div class="t" style="left:1352.5px;top:613.33px;font-size:19.3px;color:#3a3f45;font-weight:400;">320</div>
<div class="t" style="left:562px;top:650.92px;font-size:19.2px;color:#23272b;font-weight:400;">Total:</div>
<div style="position:absolute;left:516px;top:736.5px;width:1108px;height:24px;background:#fafafa"></div>
<svg style="position:absolute;left:522px;top:742px;overflow:visible;" width="12" height="15" viewBox="0 0 12 15"><path d="M11 0.5 V14.5 L1 7.5z" fill="#8a8a8a" stroke="#8a8a8a" stroke-width="1" stroke-linejoin="round"/></svg>
<div style="position:absolute;left:544px;top:742.3px;width:768px;height:13.6px;background:#8c8c8c;border-radius:7px"></div>
<svg style="position:absolute;left:1606px;top:742px;overflow:visible;" width="12" height="15" viewBox="0 0 12 15"><path d="M1 0.5 V14.5 L11 7.5z" fill="#8a8a8a" stroke="#8a8a8a" stroke-width="1" stroke-linejoin="round"/></svg>
<div style="position:absolute;left:516px;top:791px;width:1108px;height:1px;background:#e3e7ec"></div>
<div class="t" style="left:515.5px;top:827.30px;font-size:25.3px;color:#3f5ee8;font-weight:400;">Variant-NB-009-KB-0116-02</div>
<svg style="position:absolute;left:1509px;top:829px;overflow:visible;" width="22" height="22" viewBox="0 0 22 22"><path d="M11 0.5V13.5M5.2 7.8l5.8 5.8 5.8-5.8" fill="none" stroke="#a9b0b9" stroke-width="2.3"/><path d="M3.3 14.8H7.3L11 18L14.7 14.8H18.7A3.1 3.1 0 0 1 18.7 21H3.3A3.1 3.1 0 0 1 3.3 14.8z" fill="#a9b0b9"/><circle cx="18.3" cy="17.9" r="1.15" fill="#fff"/></svg>
<svg style="position:absolute;left:1539px;top:829px;overflow:visible;" width="23" height="22" viewBox="0 0 23 22"><path d="M2.5 1.5H6.2A1.8 1.8 0 0 1 9.8 1.5H11.5L13.8 4H9V18.8H2.5A1.7 1.7 0 0 1 .8 17.1V3.2A1.7 1.7 0 0 1 2.5 1.5z" fill="#a9b0b9"/><circle cx="7.3" cy="2.7" r="1.1" fill="#fff"/><path d="M11.5 5.5H18L21.7 9.2V19.2A1.5 1.5 0 0 1 20.2 20.7H11.6A1.5 1.5 0 0 1 10.1 19.2V6.9A1.5 1.5 0 0 1 11.5 5.5z" fill="#d6dade"/></svg>
<svg style="position:absolute;left:1570px;top:829px;overflow:visible;" width="21" height="22" viewBox="0 0 21 22"><path d="M9.5 .8H15.5L19 4.3V14.2A1.5 1.5 0 0 1 17.5 15.7H9.5A1.5 1.5 0 0 1 8 14.2V2.3A1.5 1.5 0 0 1 9.5 .8z" fill="none" stroke="#a9b0b9" stroke-width="1.5"/><path d="M7 5.9H2.8A1.5 1.5 0 0 0 1.3 7.4V19.2A1.5 1.5 0 0 0 2.8 20.7H11.7A1.5 1.5 0 0 0 13.2 19.2V16.5" fill="none" stroke="#a9b0b9" stroke-width="1.5"/></svg>
<svg style="position:absolute;left:1599px;top:829px;overflow:visible;" width="20" height="22" viewBox="0 0 20 22"><path d="M1.2 4.4H18.8" stroke="#a9b0b9" stroke-width="1.7"/><path d="M5.6 4.2C6.3 1.6 7.1 1 10 1S13.7 1.6 14.4 4.2" fill="none" stroke="#a9b0b9" stroke-width="1.6"/><path d="M2.9 5L3.8 19.4A1.6 1.6 0 0 0 5.4 21H14.6A1.6 1.6 0 0 0 16.2 19.4L17.1 5" fill="none" stroke="#a9b0b9" stroke-width="1.6"/><path d="M6.5 7.6V16.8M10 7.6V16.8M13.5 7.6V16.8" stroke="#a9b0b9" stroke-width="1.4"/></svg>
<div style="position:absolute;left:1624px;top:269px;width:24px;height:608px;background:#fafafa"></div>
<svg style="position:absolute;left:1628px;top:276px;overflow:visible;" width="16" height="11" viewBox="0 0 16 11"><path d="M8 0.8 L15 10.2 H1z" fill="#8a8a8a" stroke="#8a8a8a" stroke-width="1" stroke-linejoin="round"/></svg>
<div style="position:absolute;left:1629.5px;top:298px;width:13.5px;height:321px;background:#8c8c8c;border-radius:7px"></div>
<svg style="position:absolute;left:1628px;top:860px;overflow:visible;" width="16" height="11" viewBox="0 0 16 11"><path d="M1 0.8 H15 L8 10.2z" fill="#8a8a8a" stroke="#8a8a8a" stroke-width="1" stroke-linejoin="round"/></svg>
<div style="position:absolute;left:1663px;top:259px;width:3px;height:579px;background:#8c8c8c;border-radius:2px 0 0 2px"></div>
<svg style="position:absolute;left:1655px;top:198px;overflow:visible;" width="12" height="14" viewBox="0 0 12 14"><path d="M11 5 L6.5 11 H11z" fill="#8a8a8a"/></svg>
<svg style="position:absolute;left:1655px;top:856px;overflow:visible;" width="12" height="14" viewBox="0 0 12 14"><path d="M11 11.5 L6.8 5 H11z" fill="#8a8a8a"/></svg>
<div style="position:absolute;left:1414px;top:255px;width:210px;height:35px;background:#1a1a1a;border-radius:6px"></div>
<svg style="position:absolute;left:1512px;top:289px;overflow:visible;" width="13" height="8" viewBox="0 0 13 8"><path d="M0 0h13L6.5 7z" fill="#1a1a1a"/></svg>
<div class="t" style="left:1423.5px;top:262.78px;font-size:17.7px;color:#fff;font-weight:400;letter-spacing:-0.17px">Download Variant to .csv</div>
<svg style="position:absolute;left:0px;top:0px;overflow:visible;" width="1672" height="885" viewBox="0 0 1672 885"><path d="M1489.6 316.3 L1454.0 329.8 C1442.8 334.4 1433.0 339.4 1422.4 344.0 C1411.9 348.6 1401.3 352.6 1390.7 357.5 C1380.1 362.4 1369.5 367.5 1359.0 373.3 C1348.5 379.1 1336.7 385.7 1327.5 392.3 C1318.3 398.9 1310.0 405.7 1303.7 412.8 C1297.4 419.9 1292.5 427.1 1289.5 435.0 C1286.5 442.9 1285.7 450.7 1285.5 460.0 C1285.3 469.3 1286.6 482.0 1288.5 490.8 C1290.4 499.6 1292.8 505.3 1297.0 512.9 C1301.2 520.5 1306.9 529.0 1313.9 536.6 C1321.0 544.2 1330.8 552.7 1339.3 558.6 C1347.8 564.5 1354.8 568.5 1364.7 572.2 C1374.6 575.9 1390.1 579.2 1398.6 580.7 C1407.1 582.2 1408.5 581.8 1415.6 580.9 C1422.7 580.0 1432.5 578.5 1441.0 575.6 C1449.5 572.7 1459.3 568.2 1466.4 563.7 C1473.5 559.2 1478.9 553.9 1483.4 548.5 C1487.9 543.1 1491.1 536.9 1493.6 531.5 C1496.1 526.1 1496.9 523.1 1498.3 516.3 C1499.7 509.5 1500.8 499.3 1501.7 490.8 C1502.6 482.3 1503.2 473.9 1503.4 465.4 C1503.6 456.9 1503.3 452.7 1502.8 440.0 C1502.3 427.3 1501.5 402.8 1500.6 389.0 C1499.7 375.2 1498.5 367.2 1497.4 357.5 C1496.3 347.8 1495.0 336.9 1494.0 330.6 C1493.0 324.3 1492.3 321.9 1491.6 319.5 L1489.6 316.3Z" fill="#0078d4"/></svg>
<div style="position:absolute;left:1667px;top:0px;width:5px;height:885px;background:#fff"></div>
<div style="position:absolute;left:0px;top:878px;width:1672px;height:7px;background:#fff"></div>
<div style="position:absolute;left:11px;top:7px;width:1656px;height:871px;border:2px solid #a3a3a3;box-sizing:border-box"></div>
</body></html>
